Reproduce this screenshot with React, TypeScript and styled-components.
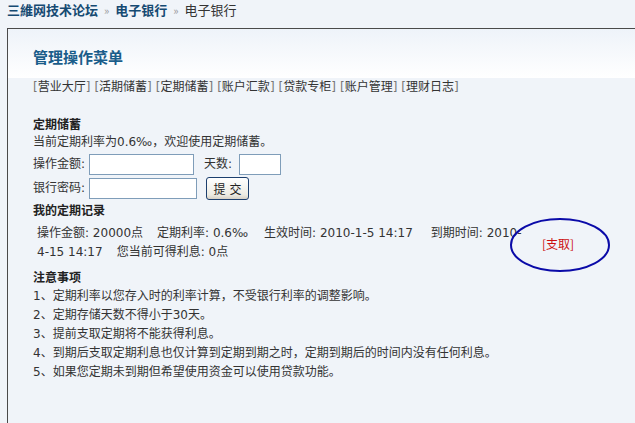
import React from "react";
import styled, { createGlobalStyle } from "styled-components";

const Global = createGlobalStyle`
  html, body { margin: 0; padding: 0; }
  body {
    background: #f0f4f9;
    font-family: "DejaVu Sans", "Noto Sans CJK SC", sans-serif;
    font-size: 12px;
    color: #333;
    overflow: hidden;
    width: 635px;
    height: 423px;
  }
`;

const Crumbs = styled.div`
  padding: 1px 7px 0;
  height: 20px;
  line-height: 18px;
  font-size: 13px;
  color: #333;
  font-family: "Noto Sans CJK SC", sans-serif;
`;

const CrumbLink = styled.a<{ $bold?: boolean }>`
  color: #154a72;
  font-weight: ${(p) => (p.$bold ? 700 : 400)};
  text-decoration: none;
`;

const Sep = styled.span`
  color: #999;
  font-size: 11px;
  margin: 0 6px;
`;

const Box = styled.div`
  margin: 7px 0 0 7px;
  width: 628px;
  border-left: 1px solid #4a4a4a;
  border-top: 1px solid #4a4a4a;
  min-height: 400px;
  overflow: hidden;
`;

const Header = styled.div`
  height: 49px;
  display: flex;
  align-items: center;
  padding-left: 25px;
  padding-top: 5px;
  box-sizing: border-box;
  background: linear-gradient(#eef3f9, #ffffff);
`;

const Title = styled.h2`
  margin: 0;
  font-size: 15px;
  font-weight: 700;
  color: #1a5d8a;
  font-family: "Noto Sans CJK SC", sans-serif;
`;

const Body = styled.div`
  padding: 0 0 0 25px;
  line-height: 19px;
`;

const Menu = styled.div`
  line-height: 18px;
  height: 18px;
  margin-bottom: 18px;
  display: flex;
  gap: 4px;
`;

const MenuItem = styled.a`
  color: #333;
  text-decoration: none;
`;

const Bracket = styled.span`
  color: #777;
`;

const Heading = styled.div<{ $top?: number }>`
  font-weight: 700;
  color: #222;
  font-family: "Noto Sans CJK SC", sans-serif;
  line-height: 19px;
  margin-top: ${(p) => p.$top ?? 0}px;
`;

const Line = styled.div`
  line-height: 19px;
`;

const FormRow = styled.div`
  display: flex;
  align-items: center;
  height: 23px;
  margin-top: 1px;
`;

const Label = styled.span<{ $gap?: number }>`
  margin-left: ${(p) => p.$gap ?? 0}px;
`;

const Input = styled.input<{ $w: number; $gap?: number }>`
  width: ${(p) => p.$w}px;
  height: 21px;
  box-sizing: border-box;
  border: 1px solid #7f9db9;
  background: #fff;
  padding: 0 2px;
  margin: 0 0 0 ${(p) => p.$gap ?? 4}px;
`;

const Button = styled.button`
  margin-left: 9px;
  width: 43px;
  height: 23px;
  box-sizing: border-box;
  border: 1px solid #1c3f6e;
  border-radius: 3px;
  background: linear-gradient(#ffffff, #ecebe3 80%, #d6d0c5);
  font-family: "Noto Sans CJK SC", sans-serif;
  font-size: 12px;
  color: #222;
  padding: 0;
  letter-spacing: 4px;
  text-indent: 4px;
`;

const Record = styled.div`
  position: relative;
  display: flex;
  align-items: center;
  margin-top: 5px;
  padding-left: 4px;
`;

const RecordText = styled.div`
  width: 500px;
  line-height: 19px;
  white-space: nowrap;
`;

const Gap = styled.span<{ $w?: number }>`
  display: inline-block;
  width: ${(p) => p.$w ?? 14}px;
`;

const Withdraw = styled.a`
  color: #cc1010;
  text-decoration: none;
  margin-left: 5px;
  font-family: "Noto Sans CJK SC", sans-serif;
`;

const Circle = styled.svg`
  position: absolute;
  left: 476px;
  top: -7px;
  pointer-events: none;
`;

const Notes = styled.ol`
  list-style: none;
  margin: 1px 0 0;
  padding: 0;
  line-height: 19px;
`;

const menu = ["营业大厅", "活期储蓄", "定期储蓄", "账户汇款", "贷款专柜", "账户管理", "理财日志"];

const notes = [
  "1、定期利率以您存入时的利率计算，不受银行利率的调整影响。",
  "2、定期存储天数不得小于30天。",
  "3、提前支取定期将不能获得利息。",
  "4、到期后支取定期利息也仅计算到定期到期之时，定期到期后的时间内没有任何利息。",
  "5、如果您定期未到期但希望使用资金可以使用贷款功能。",
];

export default function App() {
  return (
    <>
      <Global />
      <Crumbs>
        <CrumbLink $bold href="#">三維网技术论坛</CrumbLink>
        <Sep>»</Sep>
        <CrumbLink $bold href="#">电子银行</CrumbLink>
        <Sep>»</Sep>
        电子银行
      </Crumbs>
      <Box>
        <Header>
          <Title>管理操作菜单</Title>
        </Header>
        <Body>
          <Menu>
            {menu.map((m) => (
              <MenuItem key={m} href="#">
                <Bracket>[</Bracket>
                {m}
                <Bracket>]</Bracket>
              </MenuItem>
            ))}
          </Menu>
          <Heading>定期储蓄</Heading>
          <Line>当前定期利率为0.6‰，欢迎使用定期储蓄。</Line>
          <FormRow>
            <Label>操作金额:</Label>
            <Input $w={105} />
            <Label $gap={10}>天数:</Label>
            <Input $w={42} $gap={7} />
          </FormRow>
          <FormRow>
            <Label>银行密码:</Label>
            <Input $w={108} />
            <Button>提交</Button>
          </FormRow>
          <Heading>我的定期记录</Heading>
          <Record>
            <RecordText>
              操作金额: 20000点<Gap />定期利率: 0.6‰<Gap $w={16} />生效时间: 2010-1-5 14:17<Gap $w={18} />到期时间: 2010-
              <br />
              4-15 14:17<Gap />您当前可得利息: 0点
            </RecordText>
            <Withdraw href="#">[支取]</Withdraw>
            <Circle width="102" height="56" viewBox="0 0 102 56">
              <ellipse cx="51" cy="28" rx="49" ry="26" fill="none" stroke="#0a0aa8" strokeWidth="2" />
            </Circle>
          </Record>
          <Heading $top={5}>注意事项</Heading>
          <Notes>
            {notes.map((n) => (
              <li key={n}>{n}</li>
            ))}
          </Notes>
        </Body>
      </Box>
    </>
  );
}
